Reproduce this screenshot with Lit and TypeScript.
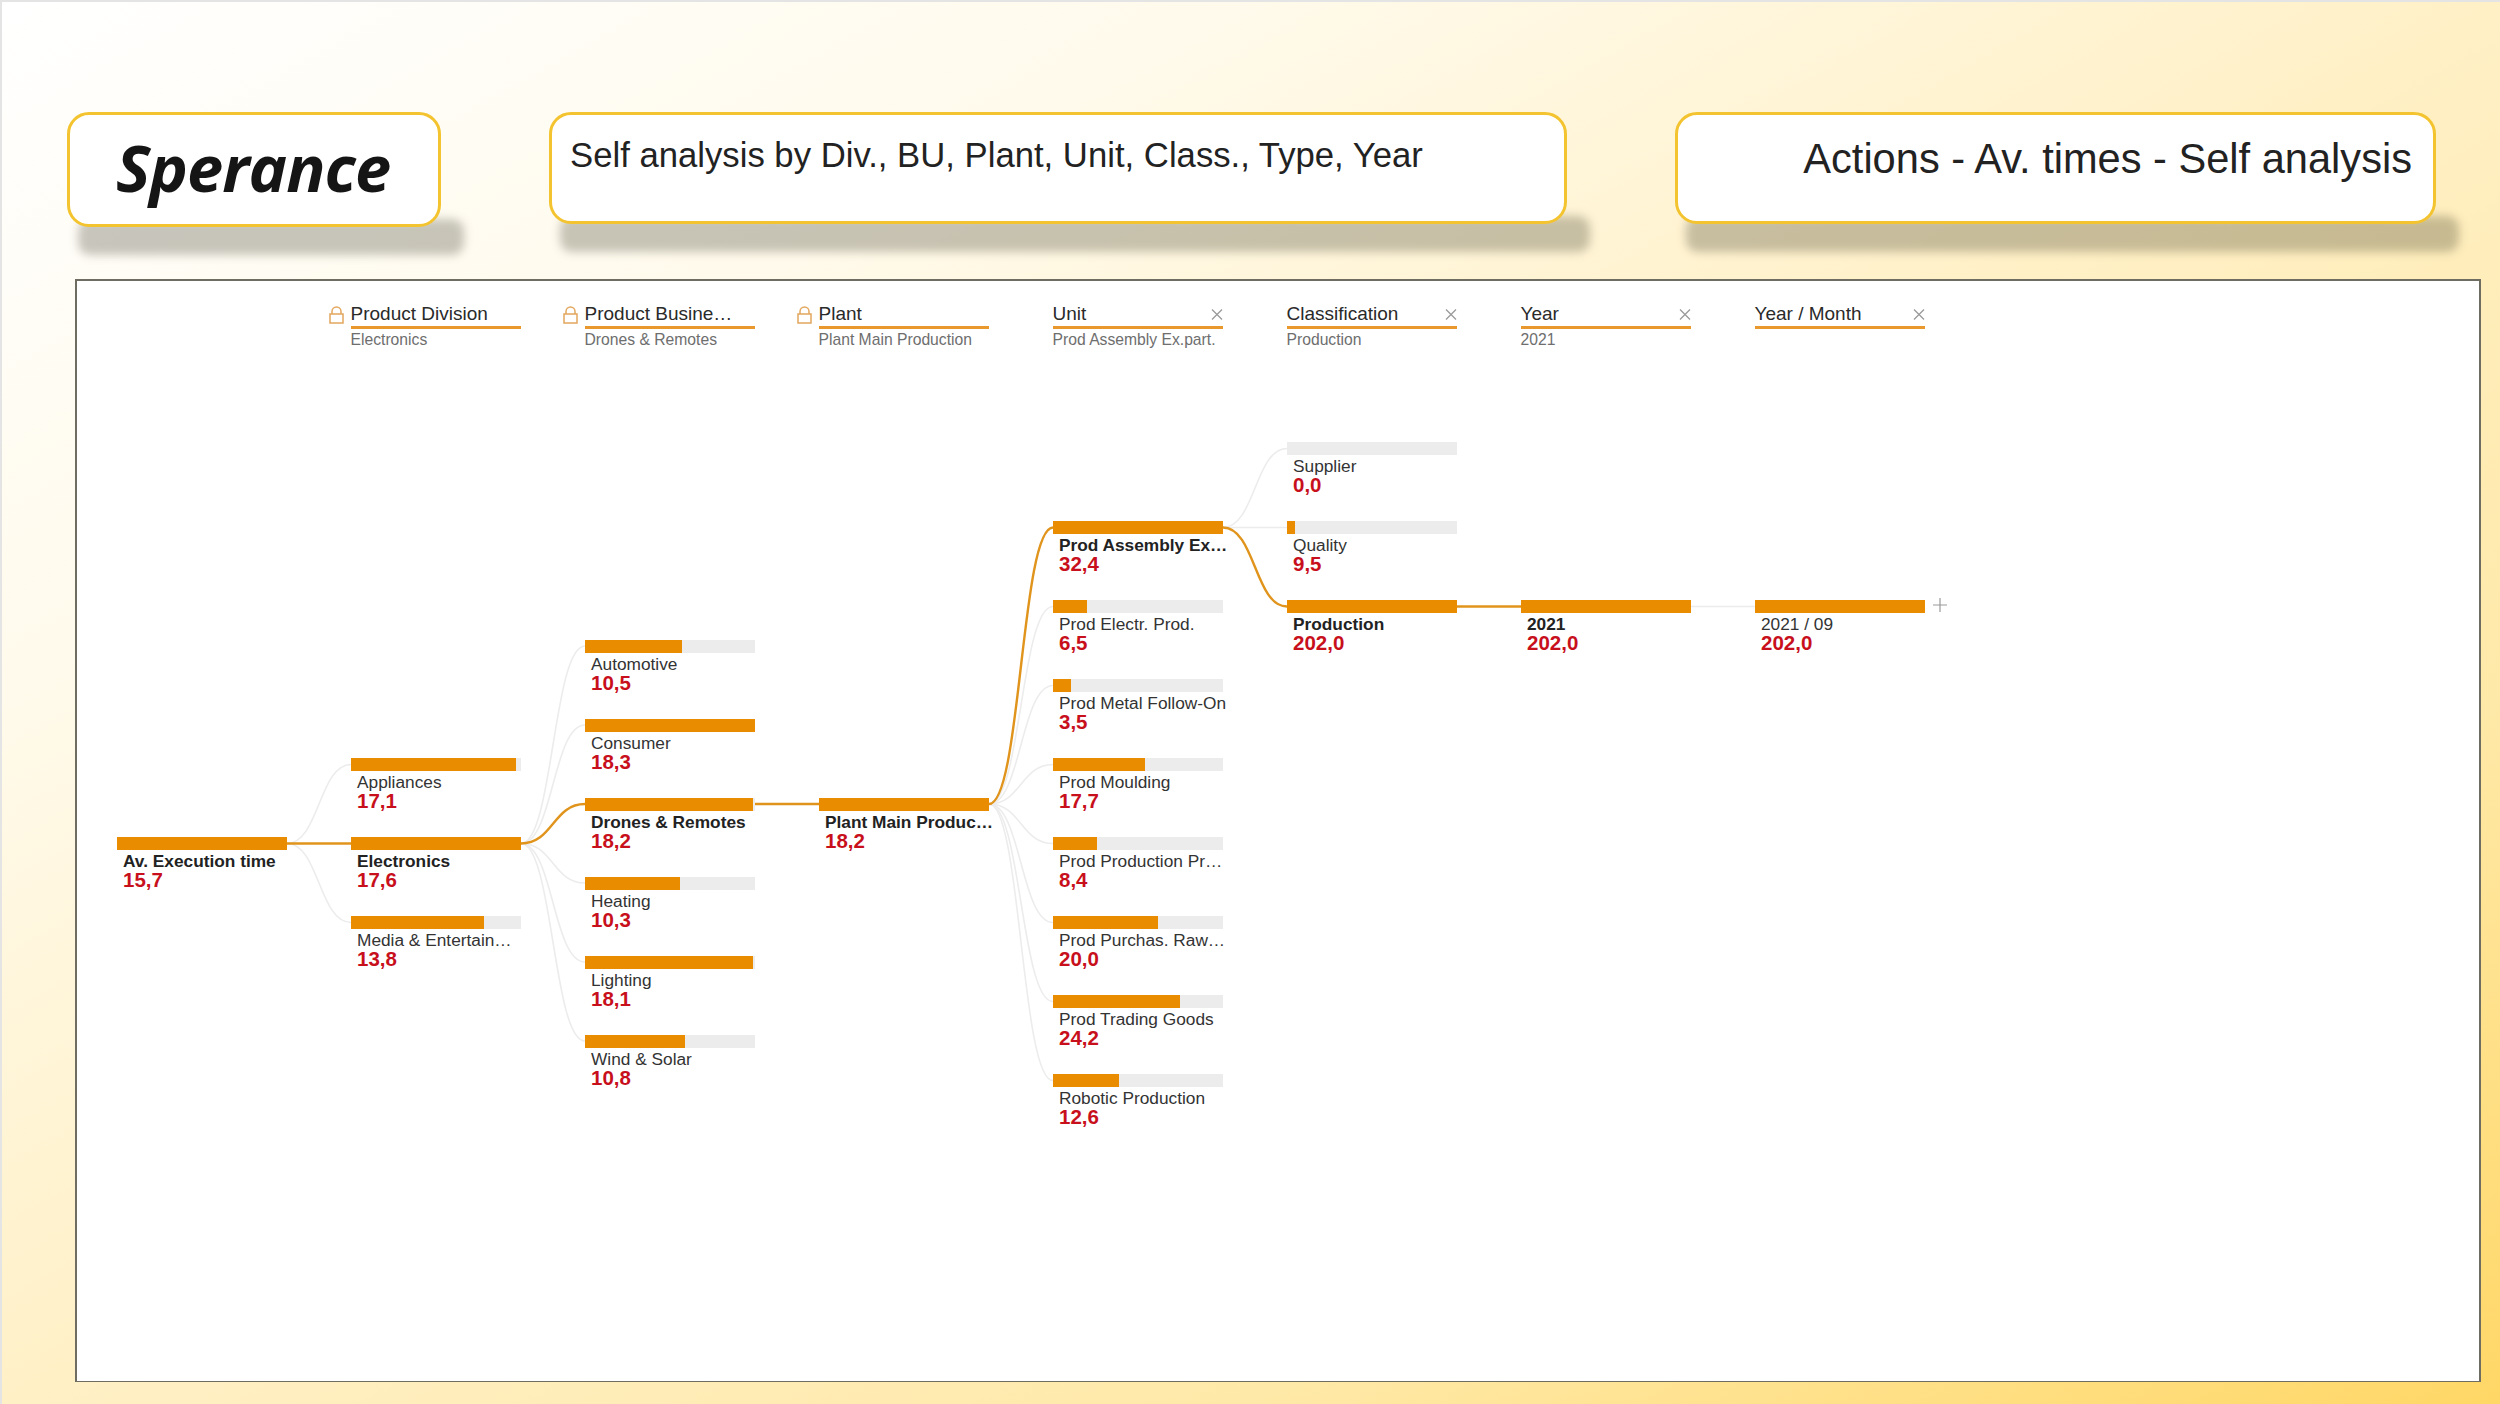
import { LitElement, html, css, svg } from "lit";
import { customElement } from "lit/decorators.js";

type N = { col: number; y: number; w: number; label: string; val: string; bold?: boolean };
// y in half rows, 0 = top of first chart row (bar top 442)
const NODES: N[] = [
  { col: 0, y: 10, w: 170, label: "Av. Execution time", val: "15,7", bold: true },
  { col: 1, y: 8, w: 165, label: "Appliances", val: "17,1" },
  { col: 1, y: 10, w: 170, label: "Electronics", val: "17,6", bold: true },
  { col: 1, y: 12, w: 133, label: "Media & Entertain…", val: "13,8" },
  { col: 2, y: 5, w: 97, label: "Automotive", val: "10,5" },
  { col: 2, y: 7, w: 170, label: "Consumer", val: "18,3" },
  { col: 2, y: 9, w: 168, label: "Drones & Remotes", val: "18,2", bold: true },
  { col: 2, y: 11, w: 95, label: "Heating", val: "10,3" },
  { col: 2, y: 13, w: 168, label: "Lighting", val: "18,1" },
  { col: 2, y: 15, w: 100, label: "Wind & Solar", val: "10,8" },
  { col: 3, y: 9, w: 170, label: "Plant Main Produc…", val: "18,2", bold: true },
  { col: 4, y: 2, w: 170, label: "Prod Assembly Ex…", val: "32,4", bold: true },
  { col: 4, y: 4, w: 34, label: "Prod Electr. Prod.", val: "6,5" },
  { col: 4, y: 6, w: 18, label: "Prod Metal Follow-On", val: "3,5" },
  { col: 4, y: 8, w: 92, label: "Prod Moulding", val: "17,7" },
  { col: 4, y: 10, w: 44, label: "Prod Production Pr…", val: "8,4" },
  { col: 4, y: 12, w: 105, label: "Prod Purchas. Raw…", val: "20,0" },
  { col: 4, y: 14, w: 127, label: "Prod Trading Goods", val: "24,2" },
  { col: 4, y: 16, w: 66, label: "Robotic Production", val: "12,6" },
  { col: 5, y: 0, w: 0, label: "Supplier", val: "0,0" },
  { col: 5, y: 2, w: 8, label: "Quality", val: "9,5" },
  { col: 5, y: 4, w: 170, label: "Production", val: "202,0", bold: true },
  { col: 6, y: 4, w: 170, label: "2021", val: "202,0", bold: true },
  { col: 7, y: 4, w: 170, label: "2021 / 09", val: "202,0" },
];

const LINKS: [number, number, number, boolean][] = [
  [0, 10, 8, false], [0, 10, 12, false], [0, 10, 10, true],
  [1, 10, 5, false], [1, 10, 7, false], [1, 10, 11, false], [1, 10, 13, false], [1, 10, 15, false], [1, 10, 9, true],
  [2, 9, 9, true],
  [3, 9, 4, false], [3, 9, 6, false], [3, 9, 8, false], [3, 9, 10, false], [3, 9, 12, false], [3, 9, 14, false], [3, 9, 16, false], [3, 9, 2, true],
  [4, 2, 0, false], [4, 2, 2, false], [4, 2, 4, true],
  [5, 4, 4, true],
  [6, 4, 4, false],
];

const HEADERS = [
  { t: "Product Division", s: "Electronics", lock: true },
  { t: "Product Busine…", s: "Drones & Remotes", lock: true },
  { t: "Plant", s: "Plant Main Production", lock: true },
  { t: "Unit", s: "Prod Assembly Ex.part." },
  { t: "Classification", s: "Production" },
  { t: "Year", s: "2021" },
  { t: "Year / Month", s: "" },
];

const STEP = 234;
const BAR = 170;
const HALF = 39.5;

@customElement("app-root")
export class AppRoot extends LitElement {
  static styles = css`
    :host { display: block; width: 2500px; height: 1404px; overflow: hidden; font-family: "Liberation Sans", Arial, sans-serif; color: #222; }
    .page { box-sizing: border-box; width: 2500px; height: 1404px; display: flex; flex-direction: column; isolation: isolate;
      padding: 110px 19px 22px 65px;
      background: linear-gradient(to bottom right, #ffffff 0%, #fffaeb 25%, #fff0c6 50%, #ffe9a8 75%, #ffd766 100%);
      border-left: 2px solid #e4e4e4; border-top: 2px solid #e4e4e4; }
    .top { display: flex; align-items: flex-start; height: 167px; flex: none; }
    .card { box-sizing: border-box; position: relative; background: #fff; border: 3px solid #f4c430; border-radius: 22px; height: 112px; }
    .card::after { content: ""; position: absolute; z-index: -1; left: 8px; right: -26px; bottom: -31px; height: 36px; border-radius: 12px; background: rgba(40, 38, 20, .26); filter: blur(5px); }
    .logo { width: 374px; height: 115px; display: flex; align-items: center; justify-content: center; margin-right: 108px; padding: 0 2px 5px 0;
      font: italic 700 65px "Open Sans", sans-serif; letter-spacing: -1px; color: #151515; }
    .mid { width: 1018px; margin-right: 108px; padding: 19px 0 0 18px; font-size: 34.7px; line-height: 42px; white-space: nowrap; }
    .right { width: 761px; padding: 19px 21px 0 0; text-align: right; font-size: 41.6px; line-height: 50px; white-space: nowrap; }
    .panel { box-sizing: border-box; position: relative; margin-left: 8px; width: 2406px; height: 1104px; background: #fff; border: 2px solid #6f6d62; border-bottom-width: 1px; padding: 0 0 0 39.5px; }
    .heads { display: grid; grid-template-columns: repeat(7, 170px); column-gap: 64px; margin-left: 234px; padding-top: 21px; height: 161px; box-sizing: border-box; }
    .head { position: relative; }
    .ht { font-size: 19px; line-height: 24px; height: 24px; border-bottom: 3px solid #e8982c; white-space: nowrap; color: #2a2a2a; }
    .hs { font-size: 15.7px; line-height: 20px; margin-top: 1px; color: #6e6e6e; white-space: nowrap; }
    .lock { position: absolute; left: -22px; top: 4px; width: 15px; height: 18px; }
    .x { position: absolute; right: 0; top: 7px; width: 12px; height: 11px; }
    .tree { display: grid; grid-template-columns: repeat(8, 170px); column-gap: 64px; grid-auto-rows: 39.5px; }
    .node { grid-row-end: span 2; min-width: 0; }
    .track { height: 13px; background: #ececec; }
    .fill { height: 100%; background: #e98c00; }
    .label { margin: 2px 0 0 6.5px; font-size: 17.3px; line-height: 19px; color: #333; white-space: nowrap; }
    .bold { font-weight: 700; color: #222; }
    .val { margin-left: 6.5px; font-size: 20.5px; font-weight: 700; line-height: 18.5px; color: #c8101c; }
    .links { position: absolute; left: 39.5px; top: 161px; overflow: visible; pointer-events: none; }
    .plus { position: absolute; left: 1856px; top: 317px; width: 14px; height: 14px; }
  `;

  private link(c: number, a: number, b: number, on: boolean) {
    const x1 = c * STEP + BAR, x2 = (c + 1) * STEP;
    const y1 = a * HALF + 6.5, y2 = b * HALF + 6.5;
    const m = (x1 + x2) / 2;
    return svg`<path d="M${x1} ${y1} C${m} ${y1} ${m} ${y2} ${x2} ${y2}" fill="none" stroke="${on ? "#e0941c" : "#ececec"}" stroke-width="${on ? 2.4 : 1.6}"/>`;
  }

  render() {
    return html`<div class="page">
      <div class="top">
        <div class="card logo">Sperance</div>
        <div class="card mid">Self analysis by Div., BU, Plant, Unit, Class., Type, Year</div>
        <div class="card right">Actions - Av. times - Self analysis</div>
      </div>
      <div class="panel">
        <div class="heads">
          ${HEADERS.map((h) => html`<div class="head">
            ${h.lock
              ? html`<svg class="lock" viewBox="0 0 15 18" fill="none" stroke="#e3a75e" stroke-width="1.5"><rect x="1" y="8" width="13" height="9"/><path d="M3 8V5.5a4.5 4.5 0 0 1 9 0V8"/></svg>`
              : html`<svg class="x" viewBox="0 0 12 11" stroke="#9a9a9a" stroke-width="1.3"><path d="M1 .5l10 10M11 .5l-10 10"/></svg>`}
            <div class="ht">${h.t}</div>
            <div class="hs">${h.s}</div>
          </div>`)}
        </div>
        <div class="tree">
          ${NODES.map((n) => html`<div class="node" style="grid-column:${n.col + 1};grid-row-start:${n.y + 1}">
            <div class="track"><div class="fill" style="width:${n.w}px"></div></div>
            <div class="label ${n.bold ? "bold" : ""}">${n.label}</div>
            <div class="val">${n.val}</div>
          </div>`)}
        </div>
        <svg class="links" width="1900" height="800">${LINKS.map((l) => this.link(...l))}</svg>
        <svg class="plus" viewBox="0 0 14 14" stroke="#9a9a9a" stroke-width="1.2"><path d="M7 0v14M0 7h14"/></svg>
      </div>
    </div>`;
  }
}
